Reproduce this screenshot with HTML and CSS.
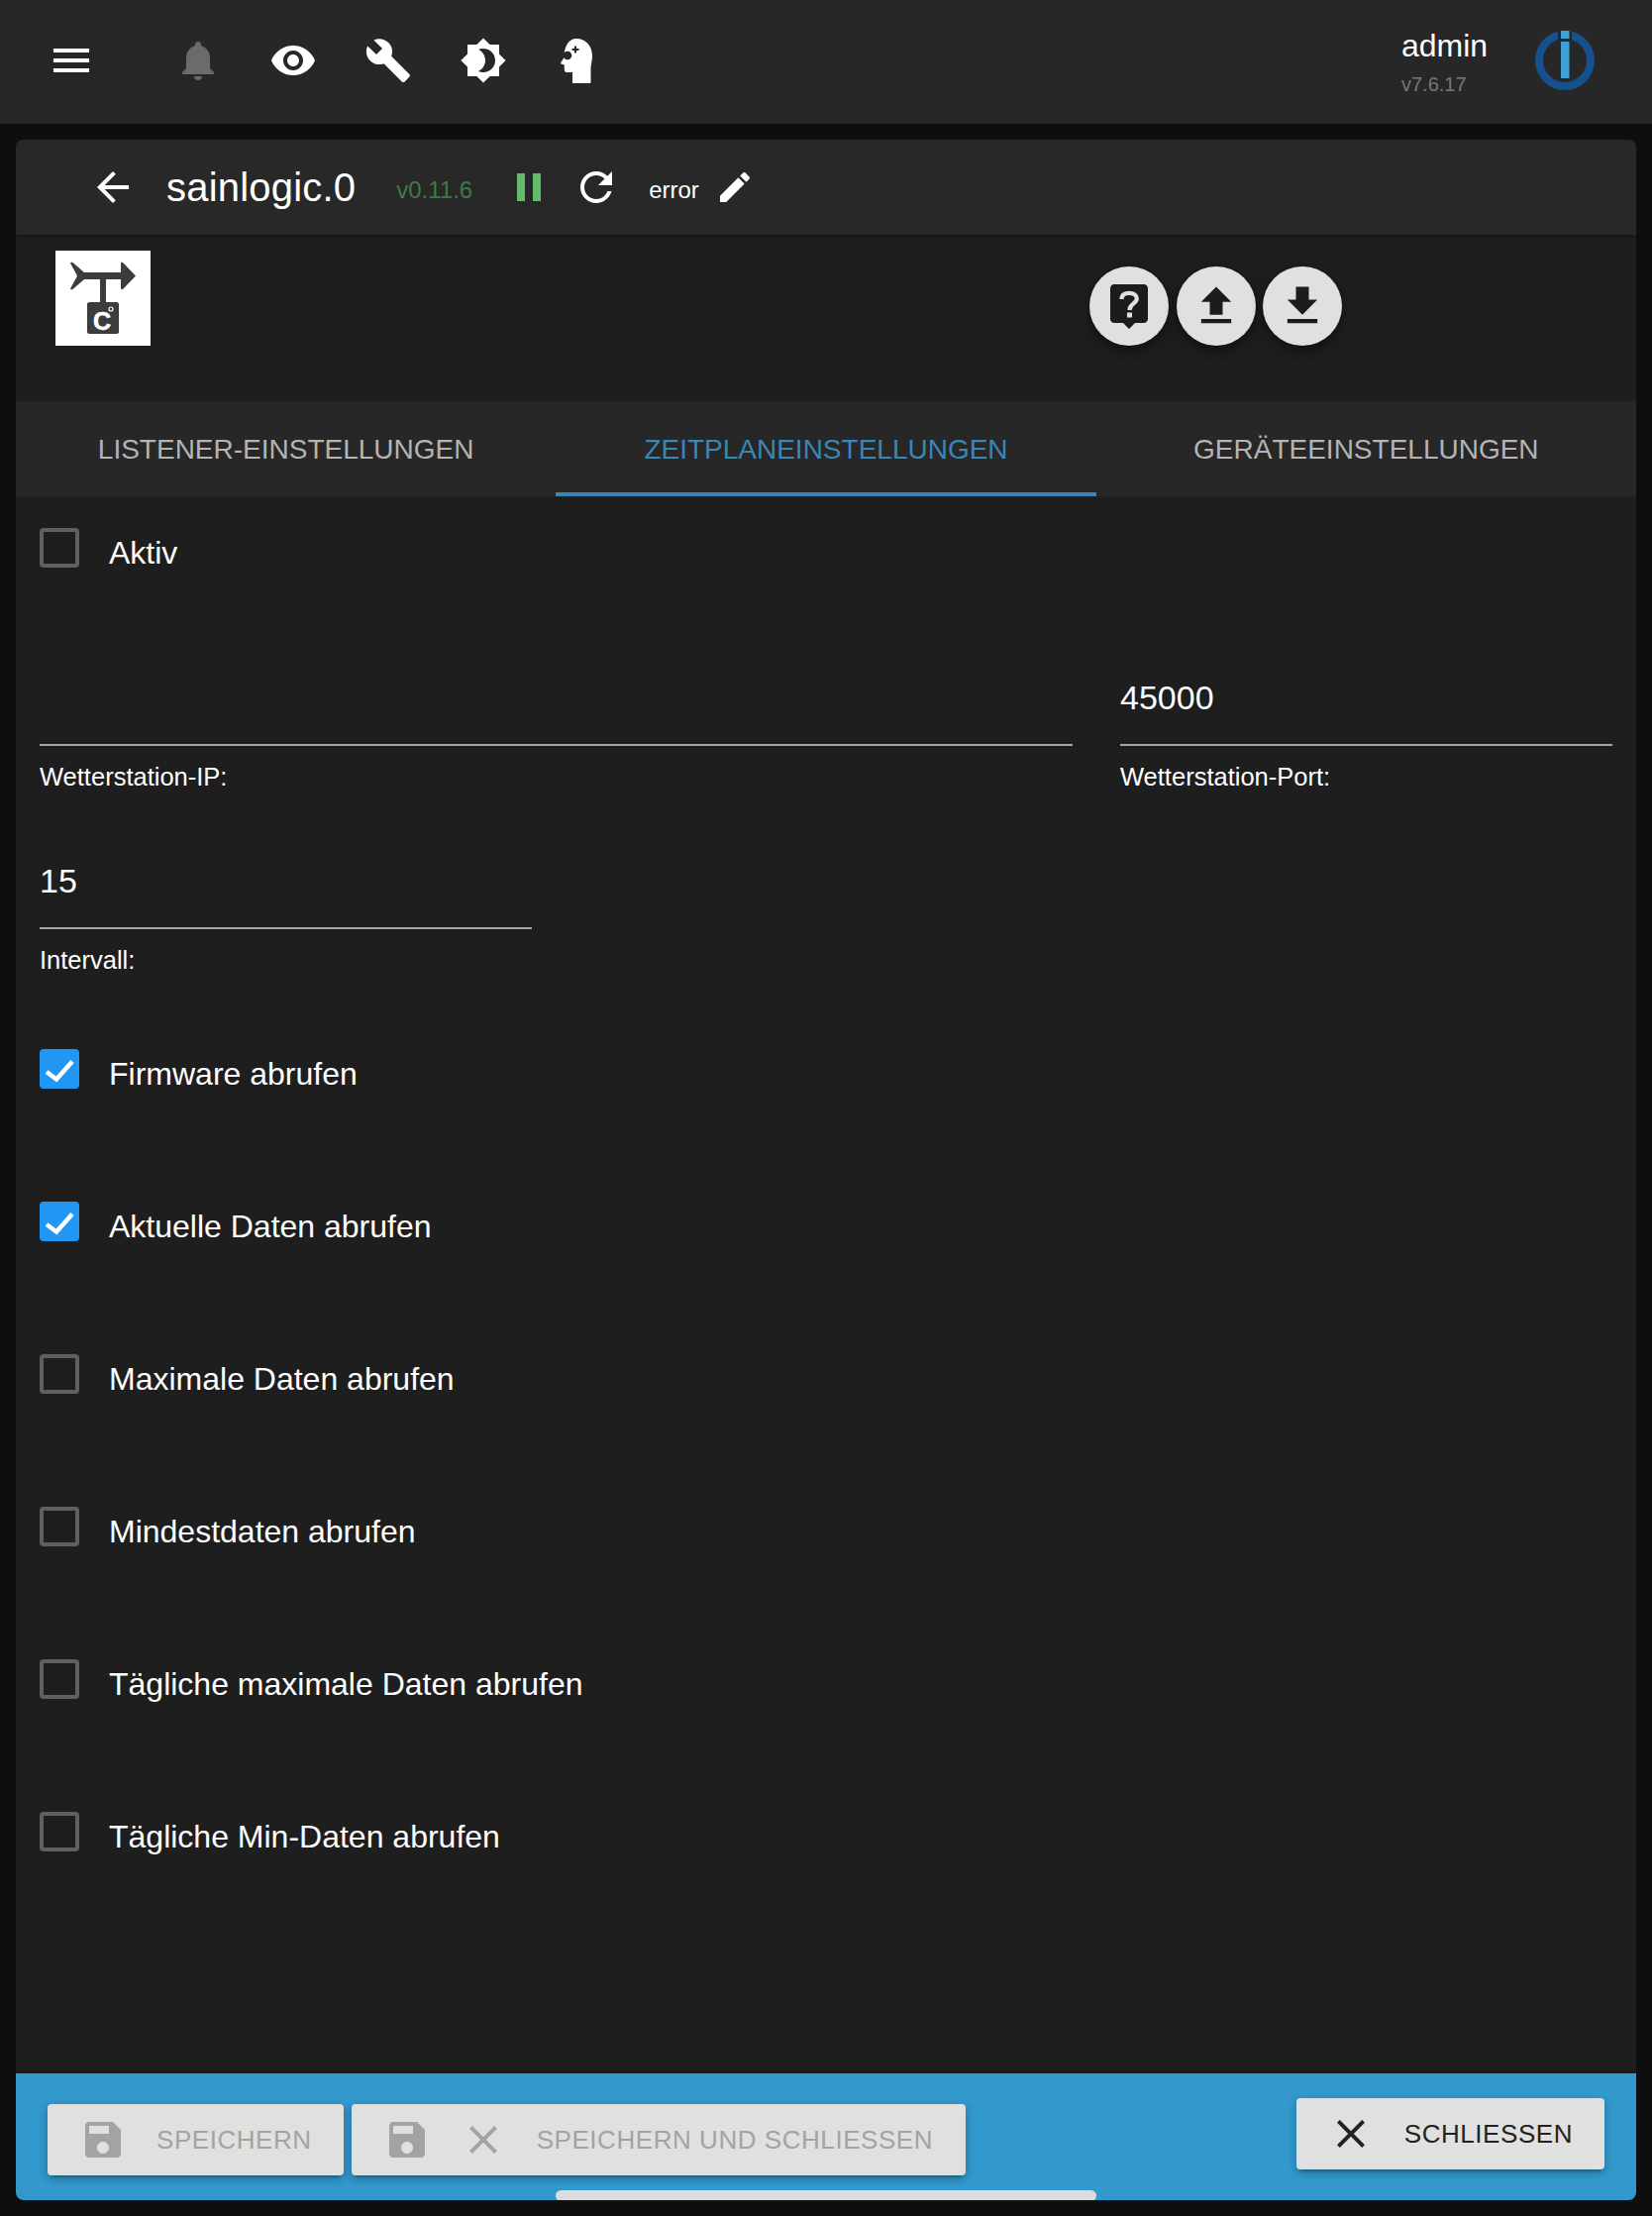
FILE: index.html
```html
<!DOCTYPE html>
<html lang="de">
<head>
<meta charset="utf-8">
<title>sainlogic.0</title>
<link rel="stylesheet" href="styles.css">
</head>
<body>
<header class="topbar">
  <svg class="icon menu-icon" viewBox="0 0 24 24"><path d="M3 18h18v-2H3v2zm0-5h18v-2H3v2zm0-7v2h18V6H3z"/></svg>
  <div class="top-icons">
    <svg class="icon bell" viewBox="0 0 24 24"><path d="M12 22c1.1 0 2-.9 2-2h-4c0 1.1.89 2 2 2zm6-6v-5c0-3.07-1.64-5.64-4.5-6.32V4c0-.83-.67-1.5-1.5-1.5s-1.5.67-1.5 1.5v.68C7.63 5.36 6 7.92 6 11v5l-2 2v1h16v-1l-2-2z"/></svg>
    <svg class="icon" viewBox="0 0 24 24"><path d="M12 4.5C7 4.5 2.73 7.61 1 12c1.73 4.39 6 7.5 11 7.5s9.27-3.11 11-7.5c-1.73-4.39-6-7.5-11-7.5zM12 17c-2.76 0-5-2.24-5-5s2.24-5 5-5 5 2.24 5 5-2.24 5-5 5zm0-8c-1.66 0-3 1.34-3 3s1.34 3 3 3 3-1.34 3-3-1.34-3-3-3z"/></svg>
    <svg class="icon" viewBox="0 0 24 24"><path d="M22.7 19l-9.1-9.1c.9-2.3.4-5-1.5-6.9-2-2-5-2.4-7.4-1.3L9 6 6 9 1.6 4.7C.4 7.1.9 10.1 2.9 12.1c1.9 1.9 4.6 2.4 6.9 1.5l9.1 9.1c.4.4 1 .4 1.4 0l2.3-2.3c.5-.4.5-1.1.1-1.4z"/></svg>
    <svg class="icon" viewBox="0 0 24 24"><path d="M20 8.69V4h-4.69L12 .69 8.69 4H4v4.69L.69 12 4 15.31V20h4.69L12 23.31 15.31 20H20v-4.69L23.31 12 20 8.69zM12 18c-.89 0-1.74-.2-2.5-.55C11.56 16.5 13 14.42 13 12s-1.44-4.5-3.5-5.45C10.26 6.2 11.11 6 12 6c3.31 0 6 2.69 6 6s-2.69 6-6 6z"/></svg>
    <svg class="icon" viewBox="0 0 48 48"><path d="M22 2C31 2 38 9 38 19C38 25 36.500 28 36.500 33V45.500C36.500 46.500 36 47 35 47H19C18.300 47 18 46.500 18 46V36H12.500C10.500 36 9.800 35 9.800 33V28.500L6.500 27.500C6 27.200 6 26.700 6.300 26.200L9.500 21C9.500 10 14 2 22 2Z"/><circle class="cut" cx="13" cy="19" r="4.300"/><path class="cut-line" d="M5 18H10M21 9.500V16.500M17.500 13H24.500"/></svg>
  </div>
  <div class="user">
    <div class="user-name">admin</div>
    <div class="user-version">v7.6.17</div>
  </div>
  <svg class="io-logo" viewBox="0 0 60 60">
    <circle class="io-ring" cx="30" cy="30" r="26"/>
    <path class="io-gap" d="M23 0H37V10H23Z"/>
    <rect class="io-dot" x="26" y="0" width="8.500" height="8"/>
    <rect class="io-bar" x="26" y="11" width="8.500" height="37"/>
  </svg>
</header>

<main class="page">
  <section class="panel">
    <div class="panel-head">
      <svg class="icon back" viewBox="0 0 24 24"><path d="M20 11H7.830l5.590-5.590L12 4l-8 8 8 8 1.410-1.410L7.830 13H20v-2z"/></svg>
      <h1 class="title">sainlogic.0</h1>
      <span class="version">v0.11.6</span>
      <svg class="icon pause" viewBox="0 0 24 24"><path d="M6 19h4V5H6v14zm8-14v14h4V5h-4z"/></svg>
      <svg class="icon refresh" viewBox="0 0 24 24"><path d="M17.650 6.350C16.200 4.900 14.210 4 12 4c-4.420 0-7.990 3.580-7.990 8s3.570 8 7.990 8c3.730 0 6.840-2.550 7.730-6h-2.080c-.82 2.330-3.040 4-5.650 4-3.310 0-6-2.690-6-6s2.690-6 6-6c1.660 0 3.140.69 4.220 1.780L13 11h7V4l-2.350 2.350z"/></svg>
      <span class="status">error</span>
      <svg class="icon edit" viewBox="0 0 24 24"><path d="M3 17.250V21h3.750L17.810 9.940l-3.750-3.750L3 17.250zM20.710 7.040c.39-.39.39-1.020 0-1.410l-2.340-2.340c-.39-.39-1.020-.39-1.410 0l-1.830 1.830 3.750 3.750 1.830-1.830z"/></svg>
    </div>

    <div class="logo-row">
      <svg class="adapter-logo" viewBox="0 0 96 96">
        <rect class="logo-bg" width="96" height="96"/>
        <path class="logo-art" d="M15 12.500C15.500 11.500 16.500 11.500 17.500 12L29 22H66V13C66 11.500 67.500 11.500 68.500 12.500L81 25.500L68.500 38.500C67.500 39.500 66 39.500 66 38V29H51V52H62C63 52 64 53 64 54V82C64 83 63 84 62 84H34C33 84 32 83 32 82V54C32 53 33 52 34 52H45V29H29L17.500 39C16.500 39.500 15.500 39.500 15 38.500L22 25.500Z"/>
        <text class="logo-c" x="47" y="80">C</text>
        <circle class="logo-deg" cx="56" cy="59" r="2"/>
      </svg>
      <div class="round-actions">
        <button class="fab" type="button" aria-label="Hilfe">
          <svg class="fab-help" viewBox="0 0 38 45"><path d="M4 0H34C36.200 0 38 1.800 38 4V35C38 37.200 36.200 39 34 39H25L19 45L13 39H4C1.800 39 0 37.200 0 35V4C0 1.800 1.800 0 4 0Z"/><path class="help-mark" d="M11.500 15C11.500 10.500 14.500 8.800 19 8.800C24 8.800 26.800 11 26.800 14.500C26.800 19.500 19.500 19.500 19.500 26"/><path class="help-dot" d="M17 28.500H22V33.500H17Z"/></svg>
        </button>
        <button class="fab" type="button" aria-label="Hochladen">
          <svg class="fab-icon" viewBox="0 0 24 24"><path d="M9 16h6v-6h4l-7-7-7 7h4v6zm-4 2h14v2H5v-2z"/></svg>
        </button>
        <button class="fab" type="button" aria-label="Herunterladen">
          <svg class="fab-icon" viewBox="0 0 24 24"><path d="M19 9h-4V3H9v6H5l7 7 7-7zM5 18v2h14v-2H5z"/></svg>
        </button>
      </div>
    </div>

    <nav class="tabs">
      <div class="tab">LISTENER-EINSTELLUNGEN</div>
      <div class="tab tab-active">ZEITPLANEINSTELLUNGEN</div>
      <div class="tab">GERÄTEEINSTELLUNGEN</div>
    </nav>

    <div class="form">
      <label class="check"><span class="box"></span><span class="check-label">Aktiv</span></label>

      <div class="field-grid field-grid-first">
        <div class="field"><div class="value"></div><div class="helper">Wetterstation-IP:</div></div>
        <div class="field"><div class="value">45000</div><div class="helper">Wetterstation-Port:</div></div>
      </div>
      <div class="field-grid field-grid-second">
        <div class="field field-short"><div class="value">15</div><div class="helper">Intervall:</div></div>
      </div>

      <div class="check-list">
        <label class="check"><span class="box box-on"><svg viewBox="0 0 40 40"><path d="M7 23L17 30.500L33 12.500"/></svg></span><span class="check-label">Firmware abrufen</span></label>
        <label class="check"><span class="box box-on"><svg viewBox="0 0 40 40"><path d="M7 23L17 30.500L33 12.500"/></svg></span><span class="check-label">Aktuelle Daten abrufen</span></label>
        <label class="check"><span class="box"></span><span class="check-label">Maximale Daten abrufen</span></label>
        <label class="check"><span class="box"></span><span class="check-label">Mindestdaten abrufen</span></label>
        <label class="check"><span class="box"></span><span class="check-label">Tägliche maximale Daten abrufen</span></label>
        <label class="check"><span class="box"></span><span class="check-label">Tägliche Min-Daten abrufen</span></label>
      </div>
    </div>

    <footer class="actions">
      <button class="btn btn-off" type="button">
        <svg class="btn-icon" viewBox="0 0 24 24"><path d="M17 3H5c-1.110 0-2 .9-2 2v14c0 1.100.89 2 2 2h14c1.100 0 2-.9 2-2V7l-4-4zm-5 16c-1.660 0-3-1.340-3-3s1.340-3 3-3 3 1.340 3 3-1.340 3-3 3zm3-10H5V5h10v4z"/></svg>
        <span class="btn-text">SPEICHERN</span>
      </button>
      <button class="btn btn-off btn-wide" type="button">
        <svg class="btn-icon" viewBox="0 0 24 24"><path d="M17 3H5c-1.110 0-2 .9-2 2v14c0 1.100.89 2 2 2h14c1.100 0 2-.9 2-2V7l-4-4zm-5 16c-1.660 0-3-1.340-3-3s1.340-3 3-3 3 1.340 3 3-1.340 3-3 3zm3-10H5V5h10v4z"/></svg>
        <svg class="btn-icon btn-icon-second" viewBox="0 0 24 24"><path d="M19 6.410L17.590 5 12 10.590 6.410 5 5 6.410 10.590 12 5 17.590 6.410 19 12 13.410 17.590 19 19 17.590 13.410 12z"/></svg>
        <span class="btn-text">SPEICHERN UND SCHLIESSEN</span>
      </button>
      <button class="btn btn-close" type="button">
        <svg class="btn-icon" viewBox="0 0 24 24"><path d="M19 6.410L17.590 5 12 10.590 6.410 5 5 6.410 10.590 12 5 17.590 6.410 19 12 13.410 17.590 19 19 17.590 13.410 12z"/></svg>
        <span class="btn-text">SCHLIESSEN</span>
      </button>
      <div class="scroll-thumb"></div>
    </footer>
  </section>
</main>
</body>
</html>
```
FILE: styles.css
```css
* { box-sizing: border-box; }
html, body { margin: 0; padding: 0; }
body {
  width: 1668px;
  height: 2237px;
  background: #0e0e0e;
  color: #fff;
  font-family: "Liberation Sans", Arial, sans-serif;
  display: flex;
  flex-direction: column;
  overflow: hidden;
}
.icon { width: 48px; height: 48px; fill: #fff; flex: none; display: block; }

/* top bar */
.topbar {
  height: 125px;
  flex: none;
  background: #272727;
  display: flex;
  align-items: center;
  padding-left: 48px;
  position: relative;
}
.menu-icon { margin-top: -3px; }
.top-icons { display: flex; gap: 48px; margin-left: 80px; margin-top: -3px; }
.bell { fill: #6b6b6b; }
.cut { fill: #272727; }
.cut-line { stroke: #272727; stroke-width: 2; fill: none; }
.user { margin-left: auto; width: 135px; margin-top: -2px; }
.user-name { font-size: 32px; line-height: 38px; }
.user-version { font-size: 20px; line-height: 24px; color: #777; margin-top: 8px; }
.io-logo { width: 60px; height: 60px; flex: none; margin-right: 58px; margin-top: -3px; }
.io-ring { fill: none; stroke: #17508e; stroke-width: 8; }
.io-gap { fill: #272727; }
.io-dot, .io-bar { fill: #3da0d6; }

/* page + panel */
.page { flex: 1; min-height: 0; padding: 16px; display: flex; }
.panel {
  flex: 1;
  display: flex;
  flex-direction: column;
  background: #1e1e1e;
  border-radius: 8px;
  overflow: hidden;
}
.panel-head {
  height: 96px;
  flex: none;
  background: #282828;
  display: flex;
  align-items: center;
  box-shadow: 0 2px 6px rgba(0, 0, 0, .25);
  position: relative;
  padding-left: 74px;
}
.title { font-size: 40px; font-weight: 400; line-height: 48px; margin: 0 0 0 30px; letter-spacing: .2px; }
.version { font-size: 24px; color: #3f7a45; margin-left: 41px; margin-top: 6px; }
.pause { fill: #66bb6a; margin-left: 33px; }
.refresh { margin-left: 20px; }
.status { font-size: 24px; margin-left: 29px; margin-top: 6px; }
.edit { width: 40px; height: 40px; margin-left: 16px; }

.logo-row { height: 168px; flex: none; display: flex; padding: 16px 0 0 40px; align-items: flex-start; }
.adapter-logo { width: 96px; height: 96px; flex: none; display: block; }
.logo-bg { fill: #fff; }
.logo-art { fill: #3c3c3c; }
.logo-c { font-family: "Liberation Sans", Arial, sans-serif; font-size: 25px; font-weight: 700; fill: #fff; stroke: #fff; stroke-width: .6; text-anchor: middle; }
.logo-deg { fill: none; stroke: #fff; stroke-width: 1.200; }
.round-actions { display: flex; gap: 7.500px; margin-left: 948px; margin-top: 16px; }
.fab {
  width: 80px;
  height: 80px;
  border: 0;
  padding: 0;
  border-radius: 50%;
  background: #e0e0e0;
  display: flex;
  align-items: center;
  justify-content: center;
  box-shadow: 0 6px 10px rgba(0, 0, 0, .3), 0 2px 16px rgba(0, 0, 0, .15);
}
.fab-help { width: 38px; height: 45px; fill: #1c1c1c; margin-top: 1px; }
.help-mark { fill: none; stroke: #e0e0e0; stroke-width: 4.200; }
.help-dot { fill: #e0e0e0; }
.fab-icon { width: 52px; height: 52px; fill: #1c1c1c; display: block; }

/* tabs */
.tabs { display: grid; grid-template-columns: repeat(3, 1fr); height: 96px; flex: none; background: #272727; }
.tab {
  display: flex;
  align-items: center;
  justify-content: center;
  font-size: 28px;
  color: #b4b4b4;
  padding-top: 6px;
  border-bottom: 4px solid transparent;
}
.tab-active { color: #3a86b5; border-bottom-color: #3a86b5; }

/* form */
.form { flex: 1; min-height: 0; padding: 32px 24px 0; }
.check { display: flex; align-items: flex-start; }
.box { width: 40px; height: 40px; flex: none; border: 4px solid #606060; border-radius: 4px; display: block; }
.box-on { background: #2196f3; border: 0; }
.box-on svg { width: 40px; height: 40px; display: block; fill: none; stroke: #fff; stroke-width: 4.500; }
.check-label { font-size: 32px; line-height: 40px; margin-left: 30px; padding-top: 5px; color: #fff; }

.field-grid { display: grid; grid-template-columns: 1043px 497px; column-gap: 48px; }
.field-grid-first { margin-top: 106px; }
.field-grid-second { margin-top: 70px; }
.field-short { width: 497px; }
.value { height: 69px; padding-bottom: 27px; font-size: 34px; line-height: 40px; border-bottom: 2px solid #a6a6a6; color: #fff; }
.helper { font-size: 25.500px; line-height: 30px; margin-top: 16px; color: #fff; }

.check-list { display: flex; flex-direction: column; gap: 109px; margin-top: 75px; }

/* footer */
.actions {
  height: 128px;
  flex: none;
  background: #3399cc;
  display: flex;
  align-items: flex-start;
  padding: 0 32px;
  gap: 8px;
  position: relative;
  box-shadow: 0 -1px 3px rgba(0, 0, 0, .3);
}
.btn {
  height: 72px;
  border: 0;
  border-radius: 4px;
  background: #e0e0e0;
  display: flex;
  align-items: center;
  padding: 0 32px;
  font-family: inherit;
  font-size: 26px;
  letter-spacing: .55px;
  box-shadow: 0 6px 2px -4px rgba(0, 0, 0, .2), 0 4px 8px rgba(0, 0, 0, .18), 0 2px 10px rgba(0, 0, 0, .12);
}
.btn-off { margin-top: 31px; color: #a3a3a3; fill: #a3a3a3; }
.btn-wide { padding-right: 33px; }
.btn-close { margin-top: 25px; margin-left: auto; color: #222; fill: #222; padding-left: 31px; padding-right: 32px; }
.btn-icon { width: 48px; height: 48px; flex: none; fill: inherit; display: block; }
.btn-icon-second { margin-left: 29px; }
.btn-text { margin-left: 30px; white-space: nowrap; }
.scroll-thumb {
  position: absolute;
  left: 545px;
  bottom: -1px;
  width: 546px;
  height: 11px;
  border-radius: 6px;
  background: #dcdcdc;
}
```
